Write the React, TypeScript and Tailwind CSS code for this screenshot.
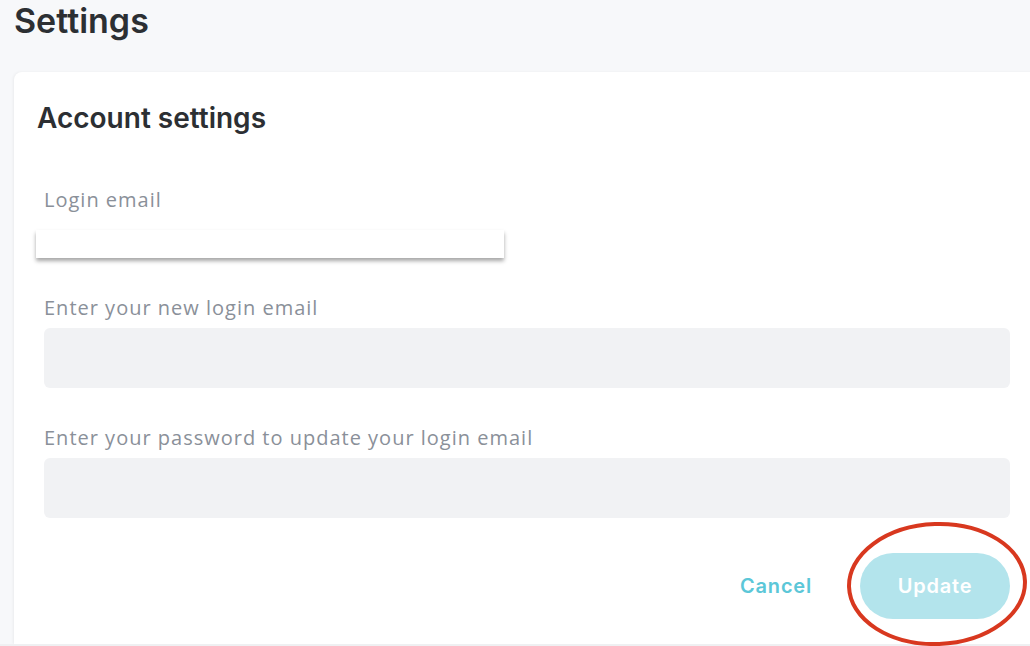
import React from "react";

export default function App() {
  return (
    <div className="relative w-[1030px] h-[646px] overflow-hidden bg-[#f7f8fa]" style={{ fontFamily: "Inter, sans-serif" }}>
      <h1 className="pl-[14px] pt-[1px] text-[34px] leading-[40px] font-semibold text-[#2c2f33]">Settings</h1>
      <div className="mt-[31px] ml-[14px] w-[1026px] h-[572px] bg-white rounded-tl-lg shadow-[-1px_0_3px_rgba(0,0,0,0.05)] pt-[28px]">
        <h2 className="pl-[23px] text-[28px] leading-[36px] font-semibold text-[#2c2f33]">Account settings</h2>
        <div className="px-[30px]" style={{ fontFamily: '"Open Sans", sans-serif' }}>
          <label className="block mt-[50px] text-[20px] leading-[28px] tracking-[1px] text-[#8a9099]">Login email</label>
          <div className="mt-[16px] -ml-[8px] w-[468px] h-[28px] bg-white shadow-[0_3px_4px_rgba(0,0,0,0.35)]" />
          <label className="block mt-[36px] text-[20px] leading-[28px] tracking-[1px] text-[#8a9099]">Enter your new login email</label>
          <div className="mt-[6px] h-[60px] rounded-md bg-[#f1f2f4]" />
          <label className="block mt-[36px] text-[20px] leading-[28px] tracking-[1px] text-[#8a9099]">Enter your password to update your login email</label>
          <div className="mt-[6px] h-[60px] rounded-md bg-[#f1f2f4]" />
          <div className="mt-[35px] flex items-center justify-end gap-[48px]" style={{ fontFamily: "Inter, sans-serif" }}>
            <button className="text-[20px] font-semibold tracking-[0.8px] text-[#5cc7d8]">Cancel</button>
            <button className="w-[150px] h-[66px] rounded-full bg-[#b3e4ec] text-[20px] font-semibold tracking-[0.8px] text-white">Update</button>
          </div>
        </div>
      </div>
      <div className="absolute left-0 bottom-0 w-full h-[2px] bg-[#eff0f2]" />
      <svg className="absolute left-[845px] top-[520px]" width="184" height="128" viewBox="0 0 184 128">
        <ellipse cx="92" cy="64" rx="88" ry="60" fill="none" stroke="#d8381f" strokeWidth="4" transform="rotate(-2 92 64)" />
      </svg>
    </div>
  );
}
